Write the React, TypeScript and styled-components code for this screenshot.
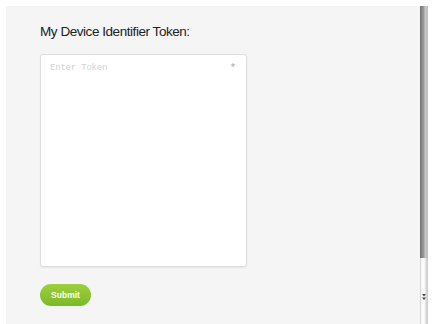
import React from "react";
import styled, { createGlobalStyle } from "styled-components";

const Global = createGlobalStyle`
  html, body { margin: 0; padding: 0; background: #ffffff; }
  body { font-family: "Liberation Sans", Arial, sans-serif; overflow: hidden; }
`;

const Page = styled.div`
  width: 434px;
  height: 324px;
  display: flex;
  padding: 6px 0 0 6px;
  box-sizing: border-box;
  background: #ffffff;
`;

const Panel = styled.div`
  flex: 0 0 414px;
  height: 318px;
  background: #f5f5f5;
  box-sizing: border-box;
  padding: 17px 0 0 34px;
  display: flex;
  flex-direction: column;
`;

const Title = styled.h2`
  margin: 0;
  font-family: "Liberation Sans", Arial, sans-serif;
  font-weight: normal;
  font-size: 13.5px;
  letter-spacing: -0.45px;
  line-height: 18px;
  color: #222;
`;

const Field = styled.div`
  position: relative;
  margin-top: 13px;
  width: 207px;
  height: 213px;
`;

const TokenArea = styled.textarea`
  width: 100%;
  height: 100%;
  box-sizing: border-box;
  border: 1px solid #dcdcdc;
  border-radius: 3px;
  background: #fff;
  box-shadow: 0 1px 2px rgba(0, 0, 0, 0.06);
  padding: 8px 9px;
  font-family: "Liberation Mono", "Courier New", monospace;
  font-size: 9px;
  letter-spacing: -0.2px;
  color: #333;
  resize: none;
  outline: none;
  &::placeholder { color: #d2d2d2; }
`;

const Required = styled.span`
  position: absolute;
  top: 7px;
  right: 12px;
  font-family: "Liberation Sans", Arial, sans-serif;
  font-size: 11px;
  color: #aaa;
`;

const SubmitButton = styled.button`
  margin-top: 17px;
  width: 51px;
  height: 22px;
  border: none;
  border-radius: 11px;
  background: linear-gradient(#9dd03d, #7bb92a);
  color: #fff;
  font-family: "Liberation Sans", Arial, sans-serif;
  font-weight: bold;
  font-size: 8.5px;
  padding: 0;
  cursor: pointer;
`;

const Scrollbar = styled.div`
  flex: 0 0 8px;
  height: 318px;
  display: flex;
  flex-direction: column;
  background: linear-gradient(90deg, #6e6e6e 0, #8a8a8a 2px, #9c9c9c 4px, #c8c8c8 5px, #bdbdbd 8px);
`;

const Track = styled.div`
  flex: 1;
`;

const Thumb = styled.div`
  height: 66px;
  background: linear-gradient(90deg, #b8b8b8 0, #f4f4f4 1px, #ffffff 4px, #dcdcdc 6px, #c8c8c8 8px);
  display: flex;
  justify-content: center;
  align-items: flex-start;
  padding-top: 36px;
  box-sizing: border-box;
`;

export default function App() {
  return (
    <>
      <Global />
      <Page>
        <Panel>
          <Title>My Device Identifier Token:</Title>
          <Field>
            <TokenArea placeholder="Enter Token" />
            <Required>*</Required>
          </Field>
          <SubmitButton>Submit</SubmitButton>
        </Panel>
        <Scrollbar>
          <Track />
          <Thumb>
            <svg width="4" height="6" viewBox="0 0 4 6">
              <path d="M0 0h4L2 2.5z M0 3.5h4L2 6z" fill="#444" />
            </svg>
          </Thumb>
        </Scrollbar>
      </Page>
    </>
  );
}
